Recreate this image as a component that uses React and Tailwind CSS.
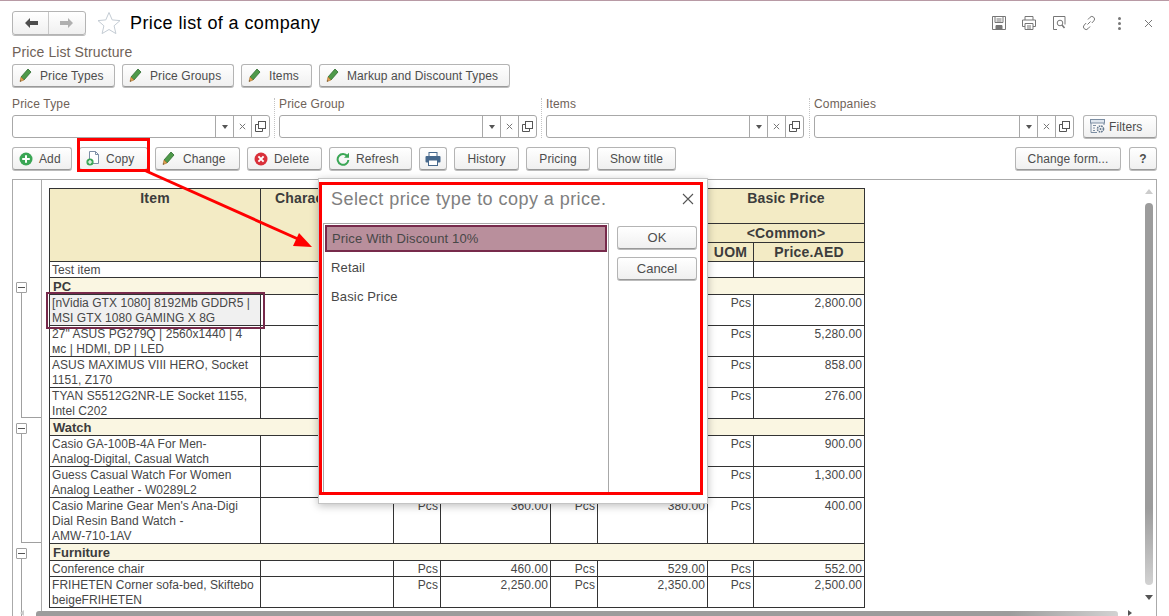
const sans = "font-['Liberation_Sans',Arial,sans-serif]";

const Pencil = () => (
  <svg width="13" height="15" viewBox="0 0 13 15" className="shrink-0 mr-[2px]">
    <path d="M9 1l3 3-7 8-3-3z" fill="#4f9a4a" stroke="#2f6b30" strokeWidth="0.8" />
    <path d="M2 9l3 3-4 1.6z" fill="#e0a050" stroke="#a86f28" strokeWidth="0.6" />
    <path d="M1 13.6l1.2-.5-.8-.8z" fill="#333" />
  </svg>
);

const AddIcon = () => (
  <svg width="14" height="14" viewBox="0 0 14 14" className="shrink-0">
    <circle cx="7" cy="7" r="6.5" fill="#3aa655" />
    <path d="M7 3.2v7.6M3.2 7h7.6" stroke="#fff" strokeWidth="2" />
  </svg>
);

const CopyIcon = () => (
  <svg width="14" height="15" viewBox="0 0 14 15" className="shrink-0">
    <path d="M3.5.5h6l3 3v9h-9z" fill="#fff" stroke="#7d8fa6" />
    <path d="M9.5.5v3h3" fill="none" stroke="#7d8fa6" />
    <circle cx="4" cy="11" r="3.6" fill="#3aa655" />
    <path d="M4 8.9v4.2M1.9 11h4.2" stroke="#fff" strokeWidth="1.2" />
  </svg>
);

const DeleteIcon = () => (
  <svg width="14" height="14" viewBox="0 0 14 14" className="shrink-0">
    <circle cx="7" cy="7" r="6.5" fill="#d9303a" />
    <path d="M4.4 4.4l5.2 5.2M9.6 4.4l-5.2 5.2" stroke="#fff" strokeWidth="2" />
  </svg>
);

const RefreshIcon = () => (
  <svg width="14" height="14" viewBox="0 0 14 14" className="shrink-0">
    <path d="M11.4 4.2A5.4 5.4 0 1 0 12.4 8" fill="none" stroke="#3aa655" strokeWidth="2" />
    <path d="M13 .8v5H8z" fill="#3aa655" />
  </svg>
);

const BluePrinter = () => (
  <svg width="16" height="14" viewBox="0 0 16 14">
    <rect x="4" y="0.5" width="8" height="4" fill="#fff" stroke="#46688c" />
    <rect x="0.5" y="4" width="15" height="6.5" rx="1" fill="#46688c" />
    <rect x="3.5" y="8" width="9" height="5.5" fill="#fff" stroke="#46688c" />
  </svg>
);

const FiltersIcon = () => (
  <svg width="15" height="15" viewBox="0 0 15 15" className="shrink-0 -mr-[2px]">
    <rect x="0.5" y="0.5" width="14" height="3.5" fill="#dfe6ee" stroke="#7c8ea3" />
    <path d="M1 4v9.5h6M14 4v2" fill="none" stroke="#7c8ea3" />
    <path d="M3 6.5h3M3 9h2M3 11.5h2" stroke="#7c8ea3" />
    <circle cx="10.5" cy="10" r="3" fill="none" stroke="#667a90" strokeWidth="1.6" strokeDasharray="1.6 0.8" />
    <circle cx="10.5" cy="10" r="1" fill="#667a90" />
  </svg>
);

const ToolIcon = ({ children }) => (
  <svg width="16" height="16" viewBox="0 0 16 16" fill="none" stroke="#777" strokeWidth="1">
    {children}
  </svg>
);

const Button = ({ icon, children, w, bold, text = "text-[12px] tracking-[0.1px]" }) => (
  <button className={`${w} h-[23px] shrink-0 flex items-center gap-[6px] rounded-[3px] border border-[#b4b4b4] border-b-[#999] bg-gradient-to-b from-white to-[#f0f0f0] shadow-[0_1px_0_#bbb] ${text} text-[#4d4d4d] ${icon && children ? "justify-start pl-[6px]" : "justify-center"} ${bold ? "font-bold" : ""}`}>
    {icon}
    {children && <span>{children}</span>}
  </button>
);

const Lookup = ({ w }) => (
  <div className={`${w} h-[23px] flex rounded-[3px] border border-[#a8a8a8] bg-white`}>
    <div className="flex-1" />
    <div className="w-[18px] flex items-center justify-center border-l border-[#a8a8a8]">
      <div className="w-0 h-0 border-x-[3px] border-x-transparent border-t-[4px] border-t-[#555]" />
    </div>
    <div className="w-[18px] flex items-center justify-center border-l border-[#a8a8a8]">
      <svg width="7" height="7" viewBox="0 0 7 7"><path d="M.8.8l5.4 5.4M6.2.8L.8 6.2" stroke="#777" /></svg>
    </div>
    <div className="w-[18px] flex items-center justify-center border-l border-[#a8a8a8]">
      <svg width="11" height="11" viewBox="0 0 11 11" fill="none" stroke="#555">
        <rect x="3.5" y="0.5" width="7" height="7" />
        <path d="M3 3.5H.5v7h7V8" />
      </svg>
    </div>
  </div>
);

const FilterField = ({ label, w = "w-[258px]" }) => (
  <div className={`${w} shrink-0`}>
    <div className="h-[18px] text-[12px] tracking-[0.15px] leading-[15px] text-[#6f6258]">{label}</div>
    <Lookup w={w} />
  </div>
);

const Sep = ({ ml = "ml-[4px]" }) => (
  <div className={`${ml} mr-[4px] w-0 h-[40px] border-l border-dotted border-[#c4c4c4]`} />
);

const rows = [
  { name: "Test item", h: "h-[16px]" },
  { group: "PC" },
  { name: "[nVidia GTX 1080] 8192Mb GDDR5 |\nMSI GTX 1080 GAMING X 8G", h: "h-[31px]", uom: "Pcs", basic: "2,800.00", hl: true },
  { name: '27" ASUS PG279Q | 2560x1440 | 4\nмс | HDMI, DP | LED', h: "h-[31px]", uom: "Pcs", basic: "5,280.00" },
  { name: "ASUS MAXIMUS VIII HERO, Socket\n1151, Z170", h: "h-[31px]", uom: "Pcs", basic: "858.00" },
  { name: "TYAN S5512G2NR-LE Socket 1155,\nIntel C202", h: "h-[31px]", uom: "Pcs", basic: "276.00" },
  { group: "Watch" },
  { name: "Casio GA-100B-4A For Men-\nAnalog-Digital, Casual Watch", h: "h-[31px]", uom: "Pcs", basic: "900.00" },
  { name: "Guess Casual Watch For Women\nAnalog Leather - W0289L2", h: "h-[31px]", uom: "Pcs", basic: "1,300.00" },
  { name: "Casio Marine Gear Men's Ana-Digi\nDial Resin Band Watch -\nAMW-710-1AV", h: "h-[46px]", uom: "Pcs", p1: "360.00", p2: "380.00", basic: "400.00" },
  { group: "Furniture" },
  { name: "Conference chair", h: "h-[16px]", uom: "Pcs", p1: "460.00", p2: "529.00", basic: "552.00" },
  { name: "FRIHETEN Corner sofa-bed, Skiftebo\nbeigeFRIHETEN", h: "h-[31px]", uom: "Pcs", p1: "2,250.00", p2: "2,350.00", basic: "2,500.00" },
];

const td = "border border-[#333] align-top text-[12px] leading-[15px] text-[#474747]";
const tdNum = `${td} text-right pr-[2px] tracking-[0.1px]`;
const th = "border border-[#333] bg-[#f3ebc5] text-center align-top text-[14px] leading-[17px] tracking-[0.2px] font-bold text-[#3c3c3c] p-0";

// the text of a cell sits 1px below the top border, without growing the row
const Cell = ({ children }) => <div className="pt-px -mb-px">{children}</div>;

const PriceTable = () => (
  <table className="table-fixed border-collapse w-[815px] shrink-0">
    <colgroup>
      <col className="w-[211px]" />
      <col className="w-[133px]" />
      <col className="w-[47px]" />
      <col className="w-[110px]" />
      <col className="w-[47px]" />
      <col className="w-[110px]" />
      <col className="w-[46px]" />
      <col className="w-[111px]" />
    </colgroup>
    <thead>
      <tr className="h-[35px]">
        <th rowSpan={3} className={th}><Cell>Item</Cell></th>
        <th rowSpan={3} className={th}><Cell>Characteristics</Cell></th>
        <th colSpan={2} className={th} />
        <th colSpan={2} className={th} />
        <th colSpan={2} className={th}><Cell>Basic Price</Cell></th>
      </tr>
      <tr className="h-[19px]">
        <th colSpan={2} className={th} />
        <th colSpan={2} className={th} />
        <th colSpan={2} className={th}><Cell>&lt;Common&gt;</Cell></th>
      </tr>
      <tr className="h-[19px]">
        <th className={th} />
        <th className={th} />
        <th className={th} />
        <th className={th} />
        <th className={th}><Cell>UOM</Cell></th>
        <th className={th}><Cell>Price.AED</Cell></th>
      </tr>
    </thead>
    <tbody>
      {rows.map((r) =>
        r.group ? (
          <tr key={r.group} className="h-[17px]">
            <td colSpan={8} className="border border-[#333] bg-[#faf6e2] px-[3px] text-[13px] leading-[16px] font-bold text-[#3c3c3c]">
              <Cell>{r.group}</Cell>
            </td>
          </tr>
        ) : (
          <tr key={r.name} className={r.h}>
            <td className={`${td} relative px-[2px] tracking-[0.05px] whitespace-pre-line ${r.hl ? "bg-[#f0f0f0]" : ""}`}>
              <Cell>{r.name}</Cell>
              {r.hl && <div className="absolute -left-[4px] -right-[5px] -top-[3px] -bottom-[4px] border-2 border-[#772a4b]" />}
            </td>
            <td className={td} />
            <td className={tdNum}><Cell>{r.p1 ? r.uom : ""}</Cell></td>
            <td className={tdNum}><Cell>{r.p1}</Cell></td>
            <td className={tdNum}><Cell>{r.p2 ? r.uom : ""}</Cell></td>
            <td className={tdNum}><Cell>{r.p2}</Cell></td>
            <td className={tdNum}><Cell>{r.uom}</Cell></td>
            <td className={tdNum}><Cell>{r.basic}</Cell></td>
          </tr>
        )
      )}
    </tbody>
  </table>
);

const OutlineGroup = ({ h }) => (
  <div className={`${h} flex flex-col pl-[3px]`}>
    <div className="w-[11px] h-[11px] mt-[5px] shrink-0 flex items-center justify-center border border-[#a0a0a0] bg-white rounded-[1px]">
      <div className="w-[7px] h-px bg-[#555]" />
    </div>
    <div className="flex-1 ml-[5px] border-l border-b border-[#a0a0a0]" />
  </div>
);

const CopyDialog = () => (
  <div className="absolute left-[318px] top-[178px] w-[390px] h-[326px] bg-white border border-[#c4c4c4] shadow-[0_2px_8px_rgba(0,0,0,0.25)]">
    <div className="absolute left-0 top-[3px] w-[384px] h-[313px] border-[3px] border-[#ff0000] pointer-events-none" />
    <div className="flex items-center justify-between pl-[12px] pr-[13px] h-[40px] mb-[4px]">
      <span className="text-[18px] tracking-[0.45px] text-[#808080]">Select price type to copy a price.</span>
      <svg width="12" height="12" viewBox="0 0 12 12"><path d="M1 1l10 10M11 1L1 11" stroke="#555" strokeWidth="1.1" /></svg>
    </div>
    <div className="flex pl-[4px] gap-[8px]">
      <div className="w-[286px] h-[270px] border border-[#a8a8a8] p-px text-[13px] tracking-[0.15px] text-[#474747]">
        <div className="h-[27px] flex items-center pl-[5px] bg-[#b98f9c] border-2 border-[#772a4b]">Price With Discount 10%</div>
        <div className="h-[29px] flex items-center pl-[6px] mt-px">Retail</div>
        <div className="h-[29px] flex items-center pl-[6px]">Basic Price</div>
      </div>
      <div className="flex flex-col gap-[8px] pt-[3px]">
        <Button w="w-[80px]" text="text-[13px]">OK</Button>
        <Button w="w-[80px]" text="text-[13px]">Cancel</Button>
      </div>
    </div>
  </div>
);

export default function App() {
  return (
    <div className={`${sans} relative w-[1169px] h-[616px] overflow-hidden bg-white flex flex-col`}>
      <div className="h-px shrink-0 bg-[#b89aa5]" />

      {/* Title row */}
      <div className="h-[24px] mt-[10px] mx-[12px] shrink-0 flex items-center">
        <div className="w-[74px] h-[24px] flex rounded-[3px] border border-[#b4b4b4] bg-gradient-to-b from-white to-[#f0f0f0] shadow-[0_1px_0_#bbb]">
          <div className="flex-1 flex items-center justify-center border-r border-[#c8c8c8]">
            <svg width="14" height="12" viewBox="0 0 14 12"><path d="M6 1L1 6l5 5V8h8V4H6z" fill="#4d4d4d" /></svg>
          </div>
          <div className="w-[36px] flex items-center justify-center">
            <svg width="14" height="12" viewBox="0 0 14 12"><path d="M8 1l5 5-5 5V8H0V4h8z" fill="#b0b0b0" /></svg>
          </div>
        </div>
        <svg width="24" height="24" viewBox="0 0 24 24" className="ml-[11px]">
          <path d="M12 1.5l3.2 7.4 7.8.7-5.9 5.2 1.8 7.8-6.9-4.1-6.9 4.1 1.8-7.8L1 9.6l7.8-.7z" fill="#fff" stroke="#c4ccd4" />
        </svg>
        <h1 className="ml-[9px] text-[18px] tracking-[0.4px] text-black">Price list of a company</h1>
        <div className="ml-auto flex items-center gap-[14px] mr-[1px]">
          <ToolIcon>
            <path d="M1.5 1.5h13v13h-13z" />
            <path d="M4 1.5v6h8v-6M5.5 4h5M5.5 6h5" />
            <path d="M5 14.5v-4h6v4z" fill="#777" />
          </ToolIcon>
          <ToolIcon>
            <path d="M4 5V1.5h8V5M4 11.5H1.5V5h13v6.5H12" />
            <path d="M4 8.5h8v6H4zM6 11h4M6 13h4" />
          </ToolIcon>
          <ToolIcon>
            <path d="M6 14.5H2.5v-13H14v8" />
            <circle cx="9" cy="8" r="2.8" />
            <path d="M11 10l2.5 3" strokeWidth="1.6" />
          </ToolIcon>
          <ToolIcon>
            <path d="M6.5 9.5l3-3M7 4.5l2-2.2a2.6 2.6 0 0 1 3.8 3.6L10.8 8M9 11.5l-2 2.2a2.6 2.6 0 0 1-3.8-3.6L5.2 8" />
          </ToolIcon>
          <div className="w-[10px] ml-[3px] flex flex-col items-center gap-[2px]">
            <div className="w-[3px] h-[3px] rounded-full bg-[#777]" />
            <div className="w-[3px] h-[3px] rounded-full bg-[#777]" />
            <div className="w-[3px] h-[3px] rounded-full bg-[#777]" />
          </div>
          <svg width="9" height="9" viewBox="0 0 9 9" className="ml-[6px] mr-[3px]"><path d="M1 1l7 7M8 1L1 8" stroke="#777" /></svg>
        </div>
      </div>

      <div className="mt-[9px] mx-[12px] h-[20px] shrink-0 text-[14px] leading-[16px] tracking-[0.1px] text-[#6f6258]">Price List Structure</div>

      <div className="mx-[12px] flex gap-[7px] shrink-0">
        <Button w="w-[103px]" icon={<Pencil />}>Price Types</Button>
        <Button w="w-[112px]" icon={<Pencil />}>Price Groups</Button>
        <Button w="w-[71px]" icon={<Pencil />}>Items</Button>
        <Button w="w-[191px]" icon={<Pencil />}>Markup and Discount Types</Button>
      </div>

      {/* Filters */}
      <div className="mt-[10px] ml-[12px] flex items-end shrink-0">
        <FilterField label="Price Type" />
        <Sep />
        <FilterField label="Price Group" />
        <Sep />
        <FilterField label="Items" />
        <Sep ml="ml-[5px]" />
        <FilterField label="Companies" w="w-[260px]" />
        <div className="ml-[9px]">
          <Button w="w-[74px]" icon={<FiltersIcon />}>Filters</Button>
        </div>
      </div>

      {/* Actions */}
      <div className="mt-[9px] mx-[12px] flex gap-[7px] shrink-0">
        <Button w="w-[60px]" icon={<AddIcon />}>Add</Button>
        <Button w="w-[69px]" icon={<CopyIcon />}>Copy</Button>
        <Button w="w-[85px]" icon={<Pencil />}>Change</Button>
        <Button w="w-[75px]" icon={<DeleteIcon />}>Delete</Button>
        <Button w="w-[83px]" icon={<RefreshIcon />}>Refresh</Button>
        <Button w="w-[28px]" icon={<BluePrinter />} />
        <Button w="w-[65px]">History</Button>
        <Button w="w-[64px]">Pricing</Button>
        <Button w="w-[79px]">Show title</Button>
        <div className="ml-auto flex gap-[8px]">
          <Button w="w-[106px]">Change form...</Button>
          <Button w="w-[28px]" bold>?</Button>
        </div>
      </div>

      {/* Grid panel */}
      <div className="relative mt-[9px] mx-[12px] flex-1 min-h-0 flex overflow-hidden border border-b-0 border-[#aaa]">
        <div className="w-[29px] shrink-0 border-r border-[#aaa] pt-[97px]">
          <OutlineGroup h="h-[141px]" />
          <OutlineGroup h="h-[125px]" />
          <OutlineGroup h="h-[80px]" />
        </div>
        <div className="pl-[7px] pt-[8px]">
          <PriceTable />
        </div>

        {/* scrollbars */}
        <div className="absolute right-[3px] top-[9px] w-0 h-0 border-x-[4px] border-x-transparent border-b-[5px] border-b-[#ccc]" />
        <div className="absolute right-[3px] top-[23px] w-[8px] h-[382px] rounded-[4px] bg-gradient-to-b from-[#9c9c9c] from-80% to-[#d2d2d2]" />
        <div className="absolute right-[3px] top-[415px] w-0 h-0 border-x-[4px] border-x-transparent border-t-[5px] border-t-[#555]" />
        <div className="absolute left-[7px] bottom-0 w-0 h-0 border-y-[3px] border-y-transparent border-r-[4px] border-r-[#ccc]" />
        <div className="absolute left-[23px] right-[38px] bottom-0 h-[5px] rounded-t-[3px] bg-gradient-to-r from-[#9c9c9c] from-90% to-[#d2d2d2]" />
        <div className="absolute right-[24px] bottom-0 w-0 h-0 border-y-[3px] border-y-transparent border-l-[4px] border-l-[#555]" />
      </div>

      {/* annotations over the page */}
      <CopyDialog />
      <div className="absolute left-[77px] top-[138px] w-[73px] h-[34px] border-[3px] border-[#ff0000]" />
      <svg width="1169" height="616" className="absolute left-0 top-0 pointer-events-none">
        <path d="M146 171L298 239" stroke="#ff0000" strokeWidth="3" />
        <path d="M312 247L293 246L299 233z" fill="#ff0000" />
      </svg>
    </div>
  );
}
